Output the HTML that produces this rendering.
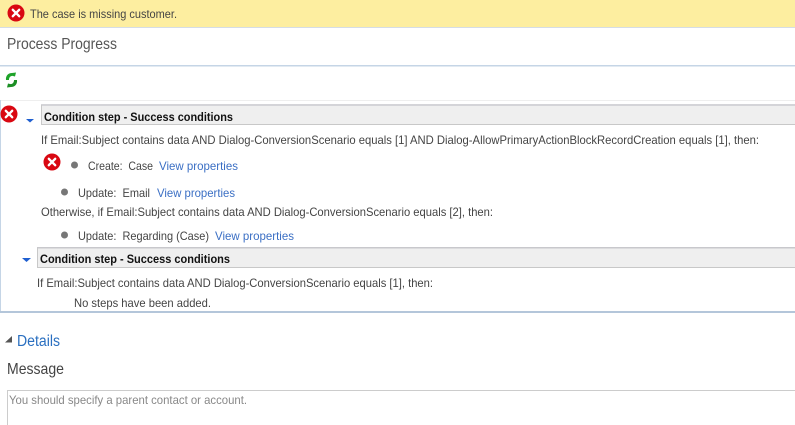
<!DOCTYPE html>
<html><head><meta charset="utf-8"><style>
html,body{margin:0;padding:0;background:#fff;width:795px;height:425px;overflow:hidden}
svg{display:block}
text{font-family:"Liberation Sans",sans-serif;font-size:12px;fill:#444}
.l{fill:#3b6fc4}
.b{font-weight:bold;fill:#111;font-size:12px}
</style></head><body>
<svg width="795" height="425" viewBox="0 0 795 425" xmlns="http://www.w3.org/2000/svg">
<defs>
<g id="err"><circle r="8.500" fill="#d90812"/><path d="M-3.200-3.200 3.200 3.200M3.200-3.200-3.200 3.200" stroke="#fff" stroke-width="2.400" stroke-linecap="round"/></g>
</defs>
<g style="filter:blur(0.25px)">
<rect width="795" height="27" fill="#fdeea0"/>
<rect y="27" width="795" height="1" fill="#d5dde6"/>
<use href="#err" x="16" y="13"/>
<text x="30" y="18" textLength="147" lengthAdjust="spacingAndGlyphs">The case is missing customer.</text>
<text x="7" y="49" textLength="110" lengthAdjust="spacingAndGlyphs" style="font-size:16px;fill:#555">Process Progress</text>
<rect y="65" width="795" height="1.500" fill="#c5d5e6"/>
<path d="M6 80c-.5-4 2-7 6-7l4-.5-1 4-2-.5c-2.500-.5-4 1.500-4 4z" fill="#1fa32a"/>
<path d="M17 80c.5 4-2 7-6 7l-4 .5 1-4 2 .5c2.500.5 4-1.500 4-4z" fill="#1c8f25"/>
<rect y="100" width="795" height="1" fill="#eee"/>
<rect y="100" width="1" height="212" fill="#c5d5e6"/>
<rect y="311" width="795" height="2" fill="#b4c6da"/>
<use href="#err" x="9" y="114"/>
<path d="M26 119h8l-4 3.500z" fill="#1f5fd0"/>
<rect x="41" y="105" width="754" height="19" fill="#efefef"/>
<rect x="41" y="104" width="754" height="2" fill="#d4d4d8"/>
<rect x="41" y="124" width="754" height="1" fill="#c8c8c8"/>
<rect x="41" y="105" width="1" height="20" fill="#c8c8c8"/>
<text class="b" x="44" y="121" textLength="189" lengthAdjust="spacingAndGlyphs">Condition step - Success conditions</text>
<text x="41" y="144" textLength="718" lengthAdjust="spacingAndGlyphs">If Email:Subject contains data AND Dialog-ConversionScenario equals [1] AND Dialog-AllowPrimaryActionBlockRecordCreation equals [1], then:</text>
<use href="#err" x="52" y="162"/>
<circle cx="74.500" cy="165" r="3.500" fill="#777"/>
<text x="88" y="170" textLength="65" lengthAdjust="spacingAndGlyphs">Create:&#160; Case</text>
<text class="l" x="159" y="170" textLength="79" lengthAdjust="spacingAndGlyphs">View properties</text>
<circle cx="64.500" cy="192" r="3.500" fill="#777"/>
<text x="78" y="197" textLength="72" lengthAdjust="spacingAndGlyphs">Update:&#160; Email</text>
<text class="l" x="157" y="197" textLength="78" lengthAdjust="spacingAndGlyphs">View properties</text>
<text x="41" y="216" textLength="452" lengthAdjust="spacingAndGlyphs">Otherwise, if Email:Subject contains data AND Dialog-ConversionScenario equals [2], then:</text>
<circle cx="64.500" cy="235" r="3.500" fill="#777"/>
<text x="78" y="240" textLength="131" lengthAdjust="spacingAndGlyphs">Update:&#160; Regarding (Case)</text>
<text class="l" x="215" y="240" textLength="79" lengthAdjust="spacingAndGlyphs">View properties</text>
<path d="M22 258h9l-4.500 4z" fill="#1f5fd0"/>
<rect x="37" y="248" width="758" height="19" fill="#efefef"/>
<rect x="37" y="247" width="758" height="1.500" fill="#c8c8cc"/>
<rect x="37" y="267" width="758" height="1" fill="#c8c8c8"/>
<rect x="37" y="248" width="1" height="20" fill="#c8c8c8"/>
<text class="b" x="40" y="263" textLength="190" lengthAdjust="spacingAndGlyphs">Condition step - Success conditions</text>
<text x="37" y="287" textLength="396" lengthAdjust="spacingAndGlyphs">If Email:Subject contains data AND Dialog-ConversionScenario equals [1], then:</text>
<text x="74" y="307" textLength="137" lengthAdjust="spacingAndGlyphs">No steps have been added.</text>
<path d="M5 342.500h7v-6.500z" fill="#555"/>
<text x="17" y="346" textLength="43" lengthAdjust="spacingAndGlyphs" style="font-size:15.500px;fill:#2a6fc0">Details</text>
<text x="7" y="374" textLength="57" lengthAdjust="spacingAndGlyphs" style="font-size:16px;fill:#444">Message</text>
<rect x="7.500" y="390.500" width="800" height="50" fill="#fff" stroke="#ccc"/>
<text x="9" y="404" textLength="238" lengthAdjust="spacingAndGlyphs" style="fill:#888">You should specify a parent contact or account.</text>
</g>
</svg>
</body></html>
